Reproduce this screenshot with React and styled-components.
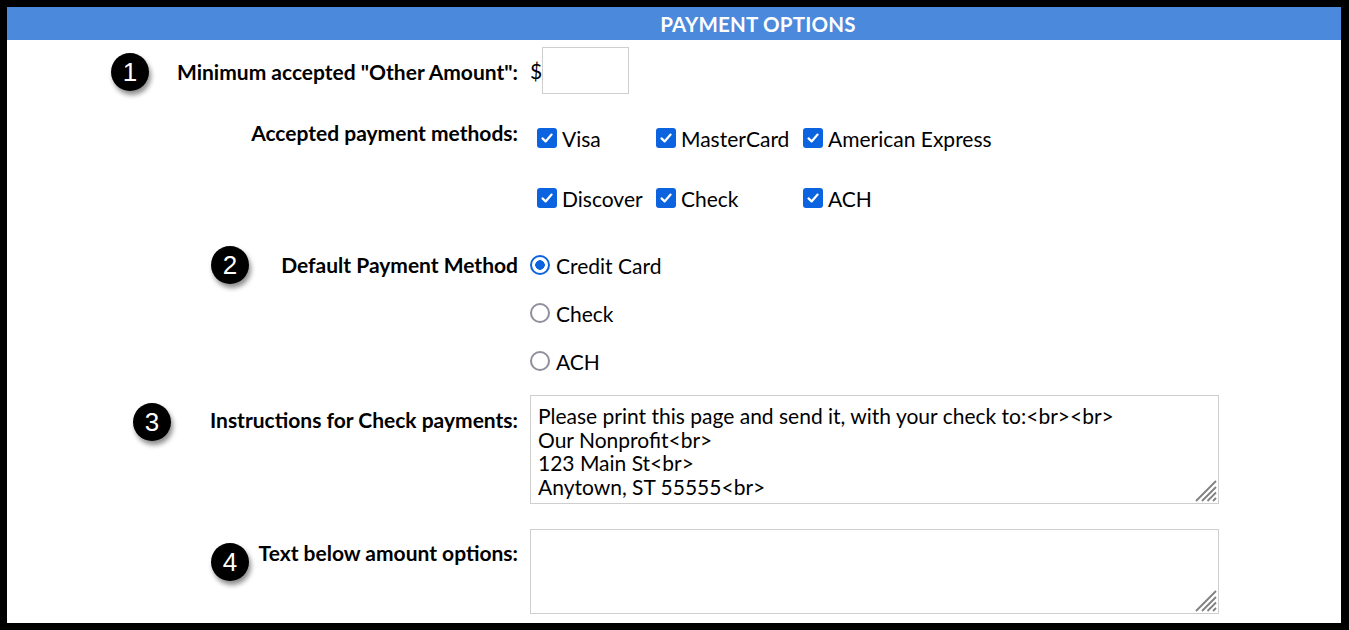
import React from 'react'
import styled, { createGlobalStyle } from 'styled-components'

const Global = createGlobalStyle`
  html, body { margin: 0; padding: 0; background: #000; }
  body { font-family: Lato, "Open Sans", sans-serif; color: #000; }
  * { box-sizing: border-box; }
`

const Grip = () => (
  <GripMark width="23" height="23" viewBox="0 0 23 23">
    <path d="M22 2 L2 22 M22 8 L8 22 M22 13.5 L13.5 22 M22 19 L19 22" stroke="#808080" strokeWidth="1.8" />
  </GripMark>
)

export default function App() {
  return (
    <Frame>
      <Global />
      <Header>PAYMENT OPTIONS</Header>

      <Row $top={7}>
        <Badge $x={130} $y={25}>1</Badge>
        <Label $pad={12}>Minimum accepted "Other Amount":</Label>
        <Amount>
          <span>$</span>
          <AmountInput />
        </Amount>
      </Row>

      <Row $top={24}>
        <Label $pad={2}>Accepted payment methods:</Label>
        <CheckGrid>
          {['Visa', 'MasterCard', 'American Express', 'Discover', 'Check', 'ACH'].map(m => (
            <CheckItem key={m}>
              <Box>
                <svg width="14" height="14" viewBox="0 0 14 14">
                  <path d="M2.5 7.4 L5.6 10.4 L11.6 3.6" fill="none" stroke="#fff" strokeWidth="2.2" strokeLinecap="round" strokeLinejoin="round" />
                </svg>
              </Box>
              {m}
            </CheckItem>
          ))}
        </CheckGrid>
      </Row>

      <Row $top={23}>
        <Badge $x={230} $y={24}>2</Badge>
        <Label $pad={11}>Default Payment Method</Label>
        <RadioList>
          <RadioItem><Radio $on />Credit Card</RadioItem>
          <RadioItem><Radio />Check</RadioItem>
          <RadioItem><Radio />ACH</RadioItem>
        </RadioList>
      </Row>

      <Row $top={10}>
        <Badge $x={152} $y={27}>3</Badge>
        <Label $pad={12}>Instructions for Check payments:</Label>
        <Field>
          <TextArea
            $h={109}
            defaultValue={'Please print this page and send it, with your check to:<br><br>\nOur Nonprofit<br>\n123 Main St<br>\nAnytown, ST 55555<br>'}
          />
          <Grip />
        </Field>
      </Row>

      <Row $top={25}>
        <Badge $x={230} $y={33}>4</Badge>
        <Label $pad={11}>Text below amount options:</Label>
        <Field>
          <TextArea $h={85} defaultValue="" />
          <Grip />
        </Field>
      </Row>
    </Frame>
  )
}

const Frame = styled.div`
  width: 1349px;
  height: 630px;
  border: 7px solid #000;
  border-right-width: 8px;
  background: #fff;
  overflow: hidden;
`

const Header = styled.div`
  height: 33px;
  background: #4a89dc;
  color: #fff;
  font-weight: 700;
  font-size: 20.5px;
  display: flex;
  align-items: center;
  justify-content: center;
  padding-left: 168px;
  letter-spacing: 0.2px;
`

const Row = styled.div`
  position: relative;
  display: grid;
  grid-template-columns: 511px 1fr;
  column-gap: 12px;
  align-items: start;
  margin-top: ${p => p.$top}px;
`

const Label = styled.div`
  text-align: right;
  font-weight: 700;
  font-size: 21px;
  line-height: 25px;
  padding-top: ${p => p.$pad}px;
`

const Badge = styled.div`
  position: absolute;
  left: ${p => p.$x - 7 - 19}px;
  top: ${p => p.$y - 19}px;
  width: 38px;
  height: 38px;
  border-radius: 50%;
  background: #000;
  color: #fff;
  font-family: "Liberation Sans", Arial, sans-serif;
  font-size: 26px;
  display: flex;
  align-items: center;
  justify-content: center;
  box-shadow: 2px 4px 5px rgba(0, 0, 0, 0.45);
`

const Amount = styled.div`
  display: flex;
  align-items: center;
  font-size: 21px;
  span { width: 12px; }
`

const AmountInput = styled.input`
  width: 87px;
  height: 47px;
  border: 1px solid #cfcfcf;
  outline: none;
`

const CheckGrid = styled.div`
  display: grid;
  grid-template-columns: 119px 147px auto;
  grid-auto-rows: 40px;
  row-gap: 20px;
  padding-left: 7px;
`

const CheckItem = styled.label`
  display: flex;
  align-items: center;
  gap: 5px;
  font-size: 21px;
  white-space: nowrap;
`

const Box = styled.span`
  width: 20px;
  height: 20px;
  border-radius: 3px;
  background: #0b63e0;
  display: flex;
  align-items: center;
  justify-content: center;
`

const RadioList = styled.div`
  display: flex;
  flex-direction: column;
`

const RadioItem = styled.label`
  height: 48px;
  display: flex;
  align-items: center;
  gap: 6px;
  font-size: 21px;
`

const Radio = styled.span`
  width: 20px;
  height: 20px;
  border-radius: 50%;
  border: 2px solid ${p => (p.$on ? '#0b63e0' : '#8f8f9d')};
  background: ${p => (p.$on ? 'radial-gradient(circle, #0b63e0 0 4.5px, #fff 5px)' : '#fff')};
`

const Field = styled.div`
  position: relative;
  width: 689px;
`

const TextArea = styled.textarea`
  display: block;
  width: 689px;
  height: ${p => p.$h}px;
  border: 1px solid #cfcfcf;
  padding: 8px 7px;
  font-family: Lato, "Open Sans", sans-serif;
  font-size: 21px;
  line-height: 23.5px;
  color: #000;
  resize: none;
  outline: none;
  overflow: hidden;
`

const GripMark = styled.svg`
  position: absolute;
  right: 2px;
  bottom: 2px;
  pointer-events: none;
`
